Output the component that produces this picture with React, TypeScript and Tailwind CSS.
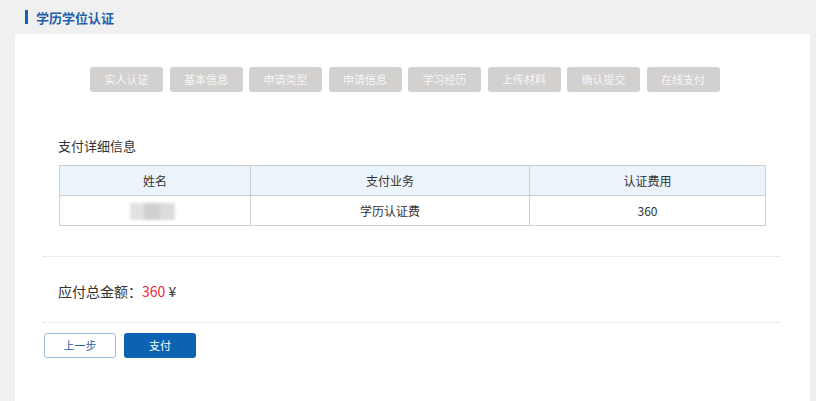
const steps = ["实人认证", "基本信息", "申请类型", "申请信息", "学习经历", "上传材料", "确认提交", "在线支付"];

const font = { fontFamily: '"Noto Sans CJK SC", "Liberation Sans", sans-serif' };

export default function App() {
  return (
    <div className="w-full h-[401px] bg-[#f0f0f0] overflow-hidden flex flex-col" style={font}>
      {/* header */}
      <div className="h-[34px] shrink-0 flex items-center pl-[25px] gap-[8px]">
        <span className="w-[3px] h-[14px] bg-[#1763b3]" />
        <span className="text-[13px] font-bold text-[#1d5fa9] leading-none">学历学位认证</span>
      </div>

      {/* panel */}
      <div className="ml-[15px] mr-[6px] flex-1 bg-white flex flex-col">
        <div className="mt-[33px] pl-[75px] flex gap-[6.5px]">
          {steps.map((s) => (
            <div
              key={s}
              className="w-[73px] h-[25px] rounded-[3px] bg-[#d3d0d0] text-[#f5f5f5] text-[11px] flex items-center justify-center"
            >
              {s}
            </div>
          ))}
        </div>

        <div className="mt-[45px] pl-[43px] text-[13px] leading-[18px] text-[#333]">支付详细信息</div>

        <table className="mt-[10px] ml-[44px] w-[707px] border-collapse text-[12px] text-[#333] table-fixed">
          <thead>
            <tr className="bg-[#ebf3fb] h-[30px]">
              <th className="w-[191px] border border-[#cfcfcf] font-normal">姓名</th>
              <th className="w-[279px] border border-[#cfcfcf] font-normal">支付业务</th>
              <th className="border border-[#cfcfcf] font-normal">认证费用</th>
            </tr>
          </thead>
          <tbody>
            <tr className="h-[30px]">
              <td className="border border-[#cfcfcf]">
                <div className="relative h-[28px]">
                  <div className="absolute left-[70px] top-[6px] w-[45px] h-[17px] flex blur-[1.5px]">
                    <div className="w-[14px] bg-[#e2e2e2]" />
                    <div className="w-[16px] bg-[#cfcfcf]" />
                    <div className="w-[15px] bg-[#dcdcdc]" />
                  </div>
                </div>
              </td>
              <td className="border border-[#cfcfcf] text-center">学历认证费</td>
              <td className="border border-[#cfcfcf] text-center">360</td>
            </tr>
          </tbody>
        </table>

        <div className="mt-[30px] ml-[28px] w-[738px] border-t border-dotted border-[#dadada]" />

        <div className="mt-[24px] pl-[43px] text-[14px] leading-[20px] text-[#333]">
          应付总金额：<span className="text-[#f0233b]">360</span> ¥
        </div>

        <div className="mt-[21px] ml-[28px] w-[738px] border-t border-dotted border-[#dadada]" />

        <div className="mt-[10px] ml-[29px] flex gap-[8px]">
          <button className="w-[72px] h-[25px] rounded-[3px] border border-[#9dbfe2] bg-white text-[#1f63ac] text-[11px]">
            上一步
          </button>
          <button className="w-[72px] h-[25px] rounded-[3px] bg-[#0d63b1] text-white text-[11px]">支付</button>
        </div>
      </div>
    </div>
  );
}
